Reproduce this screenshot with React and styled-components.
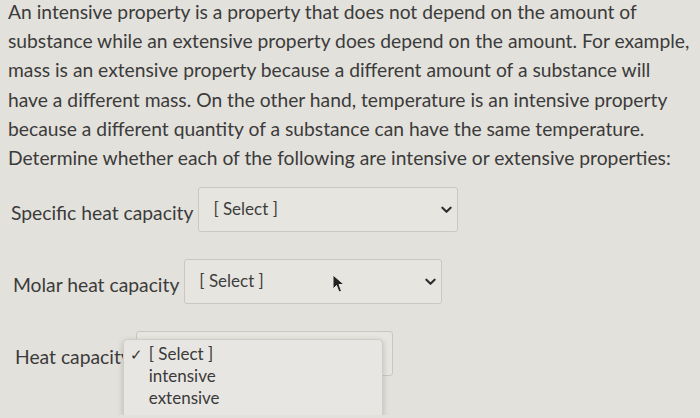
import styled, { createGlobalStyle } from 'styled-components';

const GlobalStyle = createGlobalStyle`
  html, body {
    margin: 0;
    padding: 0;
    background: #e3e1db;
  }
  body {
    font-family: Lato, "Open Sans", sans-serif;
    color: #3b3b3b;
    overflow: hidden;
  }
`;

const introLines = [
  'An intensive property is a property that does not depend on the amount of',
  'substance while an extensive property does depend on the amount. For example,',
  'mass is an extensive property because a different amount of a substance will',
  'have a different mass. On the other hand, temperature is an intensive property',
  'because a different quantity of a substance can have the same temperature.',
  'Determine whether each of the following are intensive or extensive properties:',
];

const rows = [
  { label: 'Specific heat capacity', indent: 11, width: 260, open: false },
  { label: 'Molar heat capacity', indent: 13, width: 258, open: false, cursor: true },
  { label: 'Heat capacity', indent: 15, width: 257, open: true },
];

const options = ['[ Select ]', 'intensive', 'extensive'];

export default function App() {
  return (
    <Page>
      <GlobalStyle />
      <Intro>
        {introLines.map(line => (
          <IntroLine key={line}>{line}</IntroLine>
        ))}
      </Intro>
      <Questions>
        {rows.map(row => (
          <Row key={row.label} $indent={row.indent}>
            <Label>{row.label}</Label>
            <SelectBox $width={row.width}>
              <SelectText>[ Select ]</SelectText>
              {row.open ? <Tick>✓</Tick> : <Chevron />}
              {row.cursor && <Cursor />}
              {row.open && (
                <Menu>
                  {options.map((opt, i) => (
                    <MenuItem key={opt}>
                      <Check>{i === 0 ? '✓' : ''}</Check>
                      {opt}
                    </MenuItem>
                  ))}
                </Menu>
              )}
            </SelectBox>
          </Row>
        ))}
      </Questions>
    </Page>
  );
}

function Chevron() {
  return (
    <ChevronIcon viewBox="0 0 12 8" width="11" height="8">
      <path d="M1.5 1.5 L6 6 L10.5 1.5" fill="none" stroke="#2e2e2e" strokeWidth="2.3" strokeLinecap="round" strokeLinejoin="round" />
    </ChevronIcon>
  );
}

function Cursor() {
  return (
    <CursorIcon viewBox="0 0 14 20" width="14" height="20">
      <path d="M1 1 L1 15 L4.5 11.5 L7 18 L9.5 17 L7 10.5 L12 10.5 Z" fill="#222" stroke="#e8e6e1" strokeWidth="1" />
    </CursorIcon>
  );
}

const Page = styled.div`
  width: 700px;
  height: 418px;
  padding: 0 8px;
  box-sizing: border-box;
`;

const Intro = styled.div`
  margin-top: -3px;
  font-size: 19.25px;
  line-height: 29.2px;
`;

const IntroLine = styled.div`
  white-space: nowrap;
`;

const Questions = styled.div`
  display: flex;
  flex-direction: column;
  gap: 27px;
  margin-top: 15px;
`;

const Row = styled.div`
  display: flex;
  align-items: center;
  gap: 5px;
  padding-left: ${p => p.$indent - 8}px;
`;

const Label = styled.span`
  font-size: 19.3px;
  white-space: nowrap;
  margin-top: 6px;
`;

const SelectBox = styled.div`
  position: relative;
  width: ${p => p.$width}px;
  height: 45px;
  box-sizing: border-box;
  border: 1px solid #c9c7c1;
  border-radius: 3px;
  background: #e7e5e0;
  display: flex;
  align-items: center;
  justify-content: space-between;
  padding: 0 5px 0 14px;
`;

const SelectText = styled.span`
  font-size: 17px;
  color: #3d3d3d;
  margin-top: -3px;
`;

const ChevronIcon = styled.svg`
  display: block;
`;

const Tick = styled.span`
  font-size: 11px;
  color: #333;
  margin-top: -6px;
  margin-right: 3px;
`;

const CursorIcon = styled.svg`
  position: absolute;
  left: 147px;
  top: 14px;
`;

const Menu = styled.div`
  position: absolute;
  left: -14px;
  top: 7px;
  width: 260px;
  box-sizing: border-box;
  padding: 3px 0 8px 6px;
  background: #e8e6e2;
  border: 1px solid #cfcdc7;
  border-radius: 4px;
  box-shadow: 0 2px 6px rgba(0, 0, 0, 0.18);
  z-index: 5;
`;

const MenuItem = styled.div`
  display: flex;
  align-items: center;
  font-size: 17px;
  line-height: 22px;
  color: #3a3a3a;
`;

const Check = styled.span`
  width: 19px;
  font-size: 15px;
  color: #333;
`;
